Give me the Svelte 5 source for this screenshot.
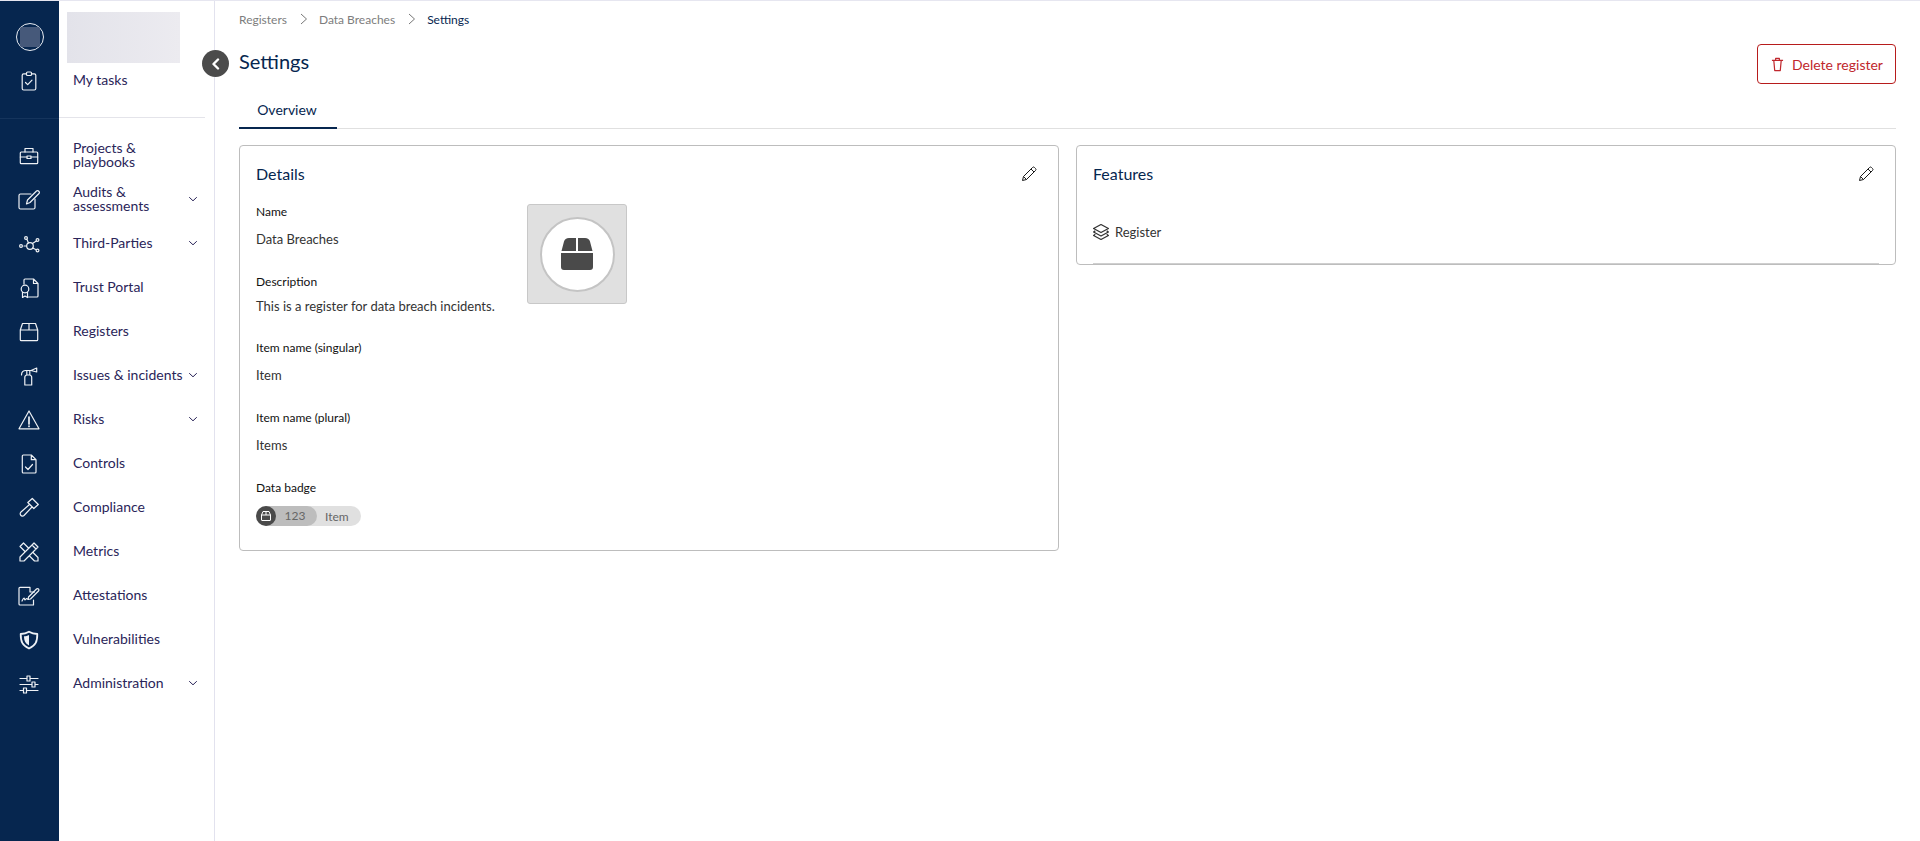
<script>
  const nav = [
    { label: "Projects &\nplaybooks", icon: "case" },
    { label: "Audits &\nassessments", icon: "edit", arrow: true },
    { label: "Third-Parties", icon: "nodes", arrow: true },
    { label: "Trust Portal", icon: "cert" },
    { label: "Registers", icon: "box" },
    { label: "Issues & incidents", icon: "ext", arrow: true },
    { label: "Risks", icon: "warn", arrow: true },
    { label: "Controls", icon: "doc" },
    { label: "Compliance", icon: "gavel" },
    { label: "Metrics", icon: "tools" },
    { label: "Attestations", icon: "sign" },
    { label: "Vulnerabilities", icon: "shield" },
    { label: "Administration", icon: "sliders", arrow: true },
  ];

  const fields = [
    { label: "Name", value: "Data Breaches" },
    { label: "Description", value: "This is a register for data breach incidents." },
    { label: "Item name (singular)", value: "Item" },
    { label: "Item name (plural)", value: "Items" },
  ];
</script>

{#snippet icon(name)}
  <svg width="24" height="24" viewBox="0 0 24 24" fill="none" stroke="currentColor" stroke-width="1.200" stroke-linecap="round" stroke-linejoin="round">
    {#if name === "tasks"}
      <rect x="5.200" y="4.800" width="13.600" height="16.200" rx="1.500" /><rect x="9.500" y="3" width="5" height="3.500" rx="1" fill="#06264f" /><path d="M8.500 13.500l2.200 2.200 4.300-4.500" />
    {:else if name === "case"}
      <rect x="3.300" y="8" width="17.400" height="11.700" rx="1" /><path d="M8 8V4.500h8V8M3.300 13h6.700M14 13h6.700" /><rect x="10" y="12" width="4" height="2.500" />
    {:else if name === "edit"}
      <path d="M14 6H3.500A1.500 1.500 0 0 0 2 7.500v12A1.500 1.500 0 0 0 3.500 21h13a1.500 1.500 0 0 0 1.500-1.500V11" /><path d="M9.500 16l1-4 9-9a1.400 1.400 0 0 1 2 0l.5.5a1.400 1.400 0 0 1 0 2l-9 9z" />
    {:else if name === "nodes"}
      <circle cx="13" cy="14" r="3.300" /><circle cx="4" cy="14" r="1.400" /><circle cx="9" cy="6" r="1.400" /><circle cx="20.500" cy="8" r="1.400" /><circle cx="20.500" cy="18.500" r="1.400" /><path d="M7 14h2.500M10 7.500l1.500 3.500M15.500 11.500l3.800-2.500M15.700 16l3.500 1.800" />
    {:else if name === "cert"}
      <path d="M7 8V4a1 1 0 0 1 1-1h8.500L21 7.500V20a1 1 0 0 1-1 1h-8.500M16.500 3v4.500H21" /><circle cx="8" cy="13" r="3.800" /><path d="M5.500 16v5.500L8 20l2.500 1.500V16" />
    {:else if name === "box"}
      <path d="M3.300 10L5.500 3.500h13l2.200 6.500M12 3.500V10M3.300 10h17.400v9.700a1 1 0 0 1-1 1h-15.400a1 1 0 0 1-1-1z" />
    {:else if name === "ext"}
      <path d="M7.800 21v-7.500a2.500 2.500 0 0 1 2.200-2.500h2.500a2.500 2.500 0 0 1 2.200 2.500V21zM9.800 11V6.500M12.800 11V6.500M8 6.500h6l5.700-2.500v4L14 6.500M9 6.500C6 6.500 4.500 8 4.500 11" />
    {:else if name === "warn"}
      <path d="M12 3L2 20.800h20z" /><path d="M12 9v7M12 18v.4" stroke-width="1.700" />
    {:else if name === "doc"}
      <path d="M5.300 4a1 1 0 0 1 1-1h8L19 7.700V20a1 1 0 0 1-1 1H6.300a1 1 0 0 1-1-1zM14.300 3v4.700H19M8.500 15l2.500 2.500 4.500-5" />
    {:else if name === "gavel"}
      <path d="M10.800 6.500l4.500-4 6 6-4.500 4zM12.500 8.500L4 16a2 2 0 0 0 3 3.500L15 11" />
    {:else if name === "tools"}
      <path d="M3 6.500L6.500 3 21 17.500V21h-3.500z" /><path d="M3 21v-4L17 3l4 4L7 21zM15 5l4 4" fill="#06264f" />
    {:else if name === "sign"}
      <path d="M13 3.300H3a1 1 0 0 0-1 1V20a1 1 0 0 0 1 1h13.500v-5M13 3.300V8h4.500M5 17c1-2 1.500-3 2-3s.5 2 1 2 1-1.500 1.500-1.500 1 1 2 .5" /><path d="M11 15.500l.5-2.500 8-8a1.300 1.300 0 0 1 2 2l-8 8z" />
    {:else if name === "shield"}
      <path d="M12 3.700c3 1.900 5.500 2.300 8.300 2.300 0 7.500-1.500 11.500-8.300 14.500C5.200 17.500 3.700 13.500 3.700 6c2.800 0 5.300-.4 8.300-2.300z" stroke-width="1.800" />
      <path d="M12 7c-1.500.8-3 1.200-5 1.300.1 4.400 1.200 7 5 9.200z" fill="currentColor" stroke="none" />
    {:else if name === "sliders"}
      <path d="M3 6.500h18M3 12.500h18M3 18.500h18" /><rect x="10" y="4" width="3" height="5" fill="#06264f" /><rect x="15" y="10" width="3" height="5" fill="#06264f" /><rect x="6.500" y="16" width="3" height="5" fill="#06264f" />
    {/if}
  </svg>
{/snippet}

{#snippet chevron()}
  <svg class="chev" width="10" height="10" viewBox="0 0 10 10" fill="none" stroke="currentColor" stroke-width="1" stroke-linecap="round"><path d="M1.500 3.500L5 6.800l3.500-3.300" /></svg>
{/snippet}

{#snippet pencil()}
  <svg width="16" height="16" viewBox="0 0 16 16" fill="none" stroke="#1a1a1a" stroke-width="1" stroke-linejoin="round"><path d="M1.500 14.500l1-4L11.500 1.500a1.400 1.400 0 0 1 2 0l1 1a1.400 1.400 0 0 1 0 2L5.500 13.500zM2.500 10.500l3 3M10 3l3 3" /></svg>
{/snippet}

<div class="shell">
  <aside class="rail">
    <div class="avatar"><span></span></div>
    <div class="rail-icon tasks">{@render icon("tasks")}</div>
    <div class="rail-line"></div>
    {#each nav as item}
      <div class="rail-icon">{@render icon(item.icon)}</div>
    {/each}
  </aside>

  <nav class="side">
    <div class="logo"></div>
    <div class="mytasks">My tasks</div>
    <hr />
    <ul>
      {#each nav as item}
        <li>
          <span class="nav-label">{item.label}</span>
          {#if item.arrow}{@render chevron()}{/if}
        </li>
      {/each}
    </ul>
    <button class="collapse" aria-label="Collapse">
      <svg width="12" height="12" viewBox="0 0 12 12" fill="none" stroke="#fff" stroke-width="2.400" stroke-linecap="round" stroke-linejoin="round"><path d="M8 1.500L3.500 6 8 10.500" /></svg>
    </button>
  </nav>

  <main>
    <div class="crumbs">
      <span>Registers</span>
      <svg width="10" height="12" viewBox="0 0 10 12" fill="none" stroke="#777" stroke-width="1"><path d="M2 1l5.500 5L2 11" /></svg>
      <span>Data Breaches</span>
      <svg width="10" height="12" viewBox="0 0 10 12" fill="none" stroke="#777" stroke-width="1"><path d="M2 1l5.500 5L2 11" /></svg>
      <span class="current">Settings</span>
    </div>

    <header>
      <h1>Settings</h1>
      <button class="danger">
        <svg width="13" height="15" viewBox="0 0 14 16" fill="none" stroke="currentColor" stroke-width="1.300" stroke-linejoin="round"><path d="M1 3.500h12M3 3.500L4 14.500h6l1-11M5 3.500V1.500h4v2" /></svg>
        Delete register
      </button>
    </header>

    <div class="tabs"><div class="tab">Overview</div></div>

    <div class="cards">
      <section class="card details">
        <div class="card-head"><h2>Details</h2>{@render pencil()}</div>
        <div class="details-body">
          <div class="fields">
            {#each fields as f}
              <div class="field">
                <div class="label">{f.label}</div>
                <div class="value">{f.value}</div>
              </div>
            {/each}
            <div class="field badge-field">
              <div class="label">Data badge</div>
              <div class="badge">
                <span class="badge-icon">
                  <svg width="12" height="12" viewBox="0 0 12 12" fill="none" stroke="#fff" stroke-width="1"><path d="M1.500 5L3 1.500h6L10.500 5M6 1.500V5M1.500 5h9v5a.5.5 0 0 1-.5.5H2a.5.5 0 0 1-.5-.5z" /></svg>
                </span>
                <span class="badge-num">123</span>
                <span class="badge-text">Item</span>
              </div>
            </div>
          </div>
          <div class="picture">
            <div class="circle">
              <svg width="32" height="32" viewBox="1 0 32 32" fill="#4a4a4a"><path d="M9 0h7v13H1.500L4 3.500Q5 0 9 0zM18 0h7q4 0 5 3.500L32.500 13H18zM1 15h32v14q0 3-3 3H4q-3 0-3-3z" /></svg>
            </div>
          </div>
        </div>
      </section>

      <section class="card features">
        <div class="card-head"><h2>Features</h2>{@render pencil()}</div>
        <div class="feature">
          <svg width="16" height="16" viewBox="1 1 14 14" fill="none" stroke="#333" stroke-width="1.100" stroke-linejoin="round"><path d="M8 1.500L14.500 5 8 8.500 1.500 5zM3 7L1.500 8 8 11.500 14.500 8 13 7M3 10l-1.500 1L8 14.500l6.500-3.500L13 10" /></svg>
          <span>Register</span>
        </div>
      </section>
    </div>
  </main>
</div>

<style>
  :global(body) {
    margin: 0;
    background: #fff;
    font-family: Lato, "Liberation Sans", sans-serif;
  }
  .shell {
    display: flex;
    height: 841px;
    overflow: hidden;
    border-top: 1px solid #e6e6f0;
    box-sizing: border-box;
  }

  .rail {
    width: 59px;
    flex: none;
    background: #06264f;
    color: #eef1f5;
    display: flex;
    flex-direction: column;
    align-items: center;
  }
  .avatar {
    margin-top: 22px;
    margin-left: 1px;
    width: 28px;
    height: 28px;
    box-sizing: border-box;
    border: 1px solid #e8ecf2;
    border-radius: 50%;
    display: flex;
    align-items: center;
    justify-content: center;
  }
  .avatar span {
    width: 20px;
    height: 20px;
    border-radius: 2px;
    background: #46597a;
  }
  .rail-icon {
    height: 44px;
    width: 100%;
    padding-right: 1px;
    box-sizing: border-box;
    display: flex;
    align-items: center;
    justify-content: center;
  }
  .rail-icon.tasks {
    height: 24px;
    margin-top: 18px;
  }
  .rail-line {
    width: 100%;
    height: 1px;
    margin-top: 25px;
    margin-bottom: 15px;
    background: #15345c;
  }

  .side {
    position: relative;
    width: 156px;
    flex: none;
    border-right: 1px solid #e2e2ee;
    padding: 11px 10px 0 8px;
    box-sizing: border-box;
  }
  .logo {
    width: 113px;
    height: 51px;
    background: linear-gradient(90deg, #e3e3ea, #ecebf0);
  }
  .mytasks, .nav-label {
    font-size: 14px;
    line-height: 14px;
    color: #2a2559;
    white-space: pre-line;
  }
  .mytasks {
    margin: 8px 0 0 6px;
    line-height: 18px;
  }
  hr {
    border: 0;
    border-top: 1px solid #e4e4ea;
    margin: 28px 0 15px -8px;
    width: 146px;
  }
  ul {
    list-style: none;
    margin: 0;
    padding: 0 0 0 6px;
  }
  li {
    height: 44px;
    display: flex;
    align-items: center;
    justify-content: space-between;
    padding-right: 6px;
  }
  .chev {
    color: #2a2559;
    flex: none;
  }
  .collapse {
    position: absolute;
    top: 49px;
    right: -15px;
    width: 27px;
    height: 27px;
    border: 0;
    border-radius: 50%;
    padding: 0;
    background: #4b4b4b;
    display: flex;
    align-items: center;
    justify-content: center;
  }

  main {
    flex: 1;
    min-width: 0;
    padding: 11px 24px 0;
    color: #06264f;
  }
  .crumbs {
    display: flex;
    align-items: center;
    height: 14px;
    gap: 11px;
    font-size: 12px;
    color: #7d7d7d;
  }
  .crumbs svg { margin: 0 -1px 0 1px; }
  .crumbs .current { color: #06264f; }
  header {
    display: flex;
    justify-content: space-between;
    align-items: flex-start;
    height: 50px;
    margin-top: 18px;
  }
  h1 {
    margin: 5px 0 0;
    font-size: 20px;
    font-weight: 400;
    line-height: 24px;
  }
  .danger {
    display: flex;
    align-items: center;
    gap: 8px;
    width: 139px;
    height: 40px;
    padding: 0 0 0 13px;
    border: 1px solid #b71c1c;
    border-radius: 4px;
    background: #fff;
    color: #c0272d;
    font: 14px Lato, sans-serif;
  }
  .tabs {
    border-bottom: 1px solid #e0e0e0;
    height: 35px;
    box-sizing: border-box;
  }
  .tab {
    width: 98px;
    height: 35px;
    padding-right: 2px;
    box-sizing: border-box;
    border-bottom: 2px solid #06264f;
    text-align: center;
    font-size: 14px;
    line-height: 32px;
  }

  .cards {
    display: flex;
    align-items: flex-start;
    gap: 17px;
    margin-top: 16px;
  }
  .card {
    flex: 1;
    min-width: 0;
    box-sizing: border-box;
    border: 1px solid #bdbdbd;
    border-radius: 4px;
    padding: 16px 16px 0;
  }
  .card-head {
    display: flex;
    justify-content: space-between;
    align-items: center;
    padding-right: 5px;
    height: 24px;
  }
  h2 {
    margin: 0;
    font-size: 16px;
    font-weight: 400;
    line-height: 24px;
  }
  .details { height: 406px; }
  .features {
    height: 120px;
    display: flex;
    flex-direction: column;
  }
  .details-body {
    display: flex;
    margin-top: 17px;
  }
  .fields { width: 271px; }
  .field { height: 70px; }
  .field:nth-child(2) { height: 66px; }
  .label {
    font-size: 12px;
    line-height: 16px;
    color: #111;
    padding-top: 1px;
  }
  .value {
    margin-top: 11px;
    font-size: 13px;
    line-height: 16px;
    color: #333;
  }
  .field:nth-child(2) .value { margin-top: 8px; }
  .badge {
    display: flex;
    align-items: center;
    width: 105px;
    height: 20px;
    margin-top: 10px;
    border-radius: 10px;
    background: #e0e0e0;
    font-size: 12px;
    color: #666;
  }
  .badge-icon {
    position: relative;
    z-index: 1;
    width: 20px;
    height: 20px;
    border-radius: 50%;
    background: #4a4a4a;
    display: flex;
    align-items: center;
    justify-content: center;
  }
  .badge-num {
    width: 51px;
    height: 20px;
    margin-left: -10px;
    padding-left: 7px;
    box-sizing: border-box;
    border-radius: 0 10px 10px 0;
    background: #bdbdbd;
    line-height: 20px;
    text-align: center;
  }
  .badge-text {
    margin-left: 8px;
  }
  .picture {
    width: 100px;
    height: 100px;
    margin-top: 1px;
    box-sizing: border-box;
    border: 1px solid #c8c8c8;
    border-radius: 3px;
    background: #e0e0e0;
    display: flex;
    align-items: center;
    justify-content: center;
  }
  .circle {
    width: 75px;
    height: 75px;
    box-sizing: border-box;
    border-radius: 50%;
    border: 2px solid #c4c4c4;
    background: #fff;
    display: flex;
    align-items: center;
    justify-content: center;
  }
  .feature {
    flex: 1;
    display: flex;
    align-items: flex-start;
    gap: 6px;
    padding-top: 38px;
    border-bottom: 1px solid #cfcfcf;
    font-size: 13px;
    line-height: 16px;
    color: #333;
  }
</style>
